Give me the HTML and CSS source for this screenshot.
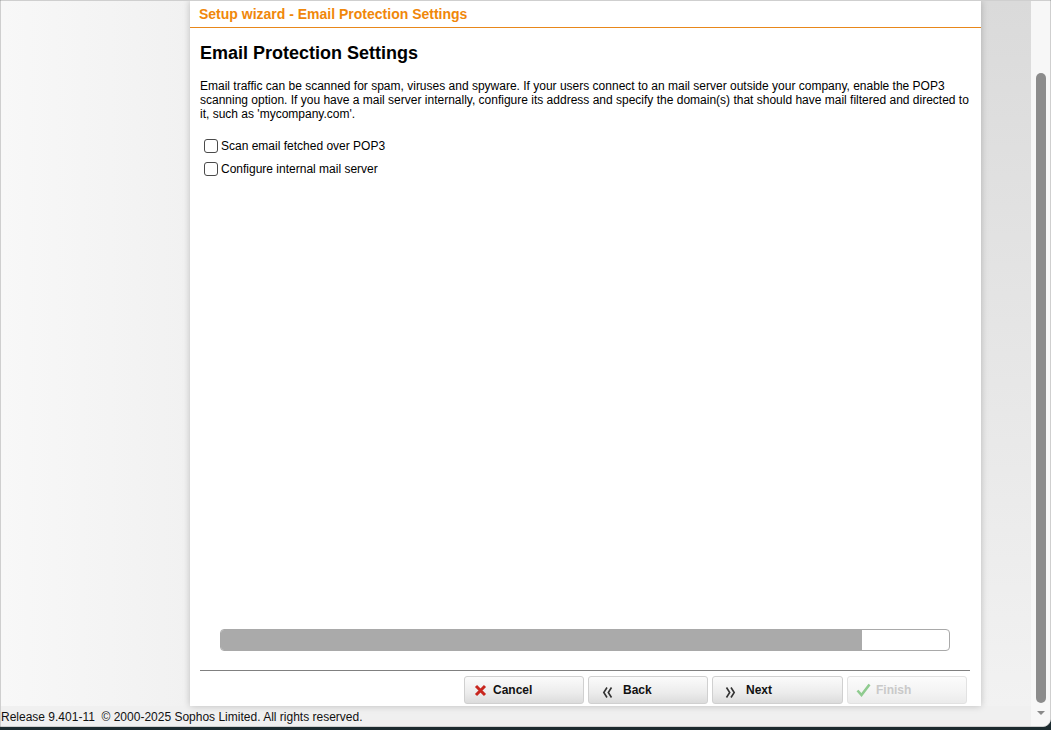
FILE: index.html
```html
<!DOCTYPE html>
<html>
<head>
<meta charset="utf-8">
<title>Setup wizard</title>
<link rel="stylesheet" href="styles.css">
</head>
<body>
<div class="window">
  <div class="main">
    <div class="content">
      <div class="gutter-left"></div>
      <div class="dialog">
        <div class="dlg-header">Setup wizard - Email Protection Settings</div>
        <div class="dlg-body">
          <h1 class="dlg-title">Email Protection Settings</h1>
          <p class="dlg-text">Email traffic can be scanned for spam, viruses and spyware. If your users connect to an mail server outside your company, enable the POP3 scanning option. If you have a mail server internally, configure its address and specify the domain(s) that should have mail filtered and directed to it, such as 'mycompany.com'.</p>
          <label class="check-row"><input type="checkbox" class="check"><span>Scan email fetched over POP3</span></label>
          <label class="check-row"><input type="checkbox" class="check"><span>Configure internal mail server</span></label>
        </div>
        <div class="progress"><div class="progress-fill" style="width:88%"></div></div>
        <div class="divider"></div>
        <div class="buttons">
          <button class="btn btn-cancel">
            <svg class="ico" width="13" height="13" viewBox="0 0 13 13"><path d="M2 2 L11 11 M11 2 L2 11" stroke="#c8261e" stroke-width="3" stroke-linecap="butt"/></svg>
            <span>Cancel</span>
          </button>
          <button class="btn btn-back">
            <svg class="ico ico-nav" width="11" height="12" viewBox="0 0 11 12"><path d="M5 1.5 L1.8 6.5 L5 11.5 M9.5 1.5 L6.3 6.5 L9.5 11.5" stroke="#333" stroke-width="1.6" fill="none"/></svg>
            <span>Back</span>
          </button>
          <button class="btn btn-next">
            <svg class="ico ico-nav" width="11" height="12" viewBox="0 0 11 12"><path d="M1.5 1.5 L4.7 6.5 L1.5 11.5 M6 1.5 L9.2 6.5 L6 11.5" stroke="#333" stroke-width="1.6" fill="none"/></svg>
            <span>Next</span>
          </button>
          <button class="btn btn-finish" disabled>
            <svg class="ico" width="15" height="14" viewBox="0 0 15 14"><path d="M1.5 7.5 L5.5 12 L13.5 1.5" stroke="#8fcb8f" stroke-width="2.6" fill="none"/></svg>
            <span>Finish</span>
          </button>
        </div>
      </div>
      <div class="gutter-right"></div>
    </div>
    <div class="status">Release 9.401-11&nbsp; © 2000-2025 Sophos Limited. All rights reserved.</div>
  </div>
  <div class="scrollbar">
    <div class="thumb"></div>
    <div class="arrow"></div>
  </div>
</div>
</body>
</html>
```

FILE: styles.css
```css
html, body {
  margin: 0;
  padding: 0;
}
body {
  background: #1c2b2f;
  width: 1051px;
  height: 730px;
  overflow: hidden;
  font-family: "Liberation Sans", Arial, sans-serif;
  font-size: 12px;
  color: #000;
}
.window {
  box-sizing: border-box;
  width: 1051px;
  height: 727px;
  border: 1px solid #cfcfcf;
  border-bottom-right-radius: 8px;
  overflow: hidden;
  display: flex;
  background: #f0f0f0;
}
.main {
  width: 1030px;
  display: flex;
  flex-direction: column;
}
.content {
  height: 705px;
  display: flex;
}
.gutter-left {
  width: 189px;
  background: linear-gradient(to right, #f8f8f8, #f1f1f1);
}
.gutter-right {
  flex: 1;
  background: linear-gradient(to bottom, #dadada, #e6e6e6 50%, #f2f2f2);
}
.dialog {
  width: 791px;
  background: #fff;
  display: flex;
  flex-direction: column;
  box-shadow: 0 0 7px rgba(0, 0, 0, 0.22);
  position: relative;
  z-index: 1;
}
.dlg-header {
  height: 26px;
  line-height: 27px;
  padding-left: 9px;
  color: #f0870a;
  font-weight: bold;
  font-size: 14px;
  border-bottom: 1px solid #e8871a;
}
.dlg-body {
  flex: 1;
  padding: 0 10px;
}
.dlg-title {
  margin: 14px 0 0 0;
  font-size: 18px;
  line-height: 22px;
  font-weight: bold;
}
.dlg-text {
  margin: 15px 0 0 0;
  font-size: 12px;
  line-height: 14px;
}
.check-row {
  display: flex;
  align-items: center;
  margin-top: 9px;
  padding-left: 4px;
  height: 14px;
  line-height: 14px;
}
.check-row:first-of-type {
  margin-top: 18px;
}
.check {
  appearance: none;
  -webkit-appearance: none;
  margin: 0 3px 0 0;
  width: 14px;
  height: 14px;
  border: 1px solid #4a4a4a;
  border-radius: 3px;
  background: #fff;
  box-sizing: border-box;
}
.progress {
  margin: 0 31px 0 30px;
  height: 22px;
  box-sizing: border-box;
  border: 1px solid #a9a9a9;
  border-radius: 4px;
  background: #fff;
  overflow: hidden;
}
.progress-fill {
  height: 100%;
  background: #aaaaaa;
}
.divider {
  margin: 19px 11px 0 10px;
  height: 1px;
  background: #808080;
}
.buttons {
  display: flex;
  justify-content: flex-end;
  gap: 4px;
  padding: 5px 14px 2px 0;
}
.btn {
  box-sizing: border-box;
  width: 120px;
  height: 28px;
  border: 1px solid #d0d0d0;
  border-radius: 3px;
  background: linear-gradient(to bottom, #fbfbfb, #ececec 60%, #dcdcdc);
  display: flex;
  align-items: center;
  padding: 0 0 0 9px;
  font-family: "Liberation Sans", Arial, sans-serif;
  font-size: 12px;
  font-weight: bold;
  color: #111;
  cursor: default;
}
.btn-next {
  width: 131px;
}
.btn .ico {
  flex: none;
}
.btn-cancel .ico {
  margin-right: 6px;
}
.btn-back .ico {
  margin: 3px 10px 0 4px;
}
.btn-next .ico {
  margin: 3px 10px 0 3px;
}
.btn-finish {
  background: linear-gradient(to bottom, #fcfcfc, #f3f3f3 60%, #ebebeb);
  border-color: #e2e2e2;
  color: #c9c9c9;
  padding-left: 8px;
}
.btn-finish .ico {
  margin-right: 5px;
}
.status {
  height: 20px;
  line-height: 22px;
  padding-left: 0;
  background: #f0f0f0;
  color: #111;
  font-size: 12px;
  white-space: nowrap;
}
.scrollbar {
  flex: 1;
  background: #f7f7f7;
  display: flex;
  flex-direction: column;
  align-items: center;
  padding-top: 72px;
}
.thumb {
  width: 10px;
  height: 630px;
  border-radius: 5px;
  background: #8c8c8c;
  margin-left: 1px;
}
.arrow {
  margin-top: 8px;
  margin-left: 1px;
  width: 0;
  height: 0;
  border-left: 4px solid transparent;
  border-right: 4px solid transparent;
  border-top: 4px solid #8a8a8a;
}
```
